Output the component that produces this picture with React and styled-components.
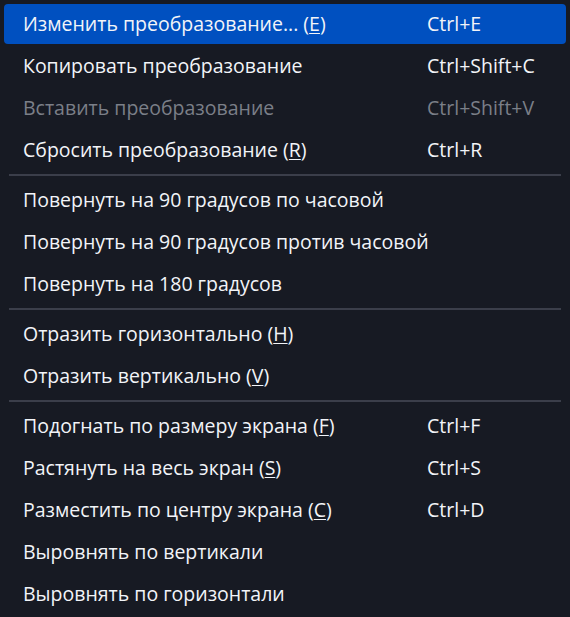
import React from "react";
import styled, { createGlobalStyle } from "styled-components";

const Global = createGlobalStyle`
  html, body { margin: 0; padding: 0; background: #171a23; }
  body { width: 570px; height: 617px; overflow: hidden; }
`;

const Menu = styled.div`
  box-sizing: border-box;
  width: 570px;
  height: 617px;
  padding: 4px 4px 3px;
  background: #171a23;
  display: flex;
  flex-direction: column;
  gap: 2px;
  font-family: "Open Sans", "Noto Sans", sans-serif;
  font-size: 19.5px;
`;

const Item = styled.div`
  box-sizing: border-box;
  height: 40px;
  display: grid;
  grid-template-columns: 404px 1fr;
  align-items: center;
  padding: 0 0 2px 19px;
  border-radius: 4px;
  background: ${(p) => (p.$active ? "#0050c0" : "transparent")};
  color: ${(p) => (p.$disabled ? "#7b7f88" : "#f2f4f8")};
  white-space: nowrap;
`;

const Label = styled.span``;
const Shortcut = styled.span``;

const Mnemonic = styled.span`
  text-decoration: underline;
  text-underline-offset: 2px;
  text-decoration-thickness: 1px;
`;

const Separator = styled.div`
  height: 2px;
  margin: 2px 5px;
  background: #3b3e4a;
`;

const groups = [
  [
    { label: ["Изменить преобразование... (", "E", ")"], sc: "Ctrl+E", active: true },
    { label: ["Копировать преобразование"], sc: "Ctrl+Shift+C" },
    { label: ["Вставить преобразование"], sc: "Ctrl+Shift+V", disabled: true },
    { label: ["Сбросить преобразование (", "R", ")"], sc: "Ctrl+R" },
  ],
  [
    { label: ["Повернуть на 90 градусов по часовой"] },
    { label: ["Повернуть на 90 градусов против часовой"] },
    { label: ["Повернуть на 180 градусов"] },
  ],
  [
    { label: ["Отразить горизонтально (", "H", ")"] },
    { label: ["Отразить вертикально (", "V", ")"] },
  ],
  [
    { label: ["Подогнать по размеру экрана (", "F", ")"], sc: "Ctrl+F" },
    { label: ["Растянуть на весь экран (", "S", ")"], sc: "Ctrl+S" },
    { label: ["Разместить по центру экрана (", "C", ")"], sc: "Ctrl+D" },
    { label: ["Выровнять по вертикали"] },
    { label: ["Выровнять по горизонтали"] },
  ],
];

export default function App() {
  return (
    <>
      <Global />
      <Menu>
        {groups.map((g, gi) => (
          <React.Fragment key={gi}>
            {gi > 0 && <Separator />}
            {g.map((it, i) => (
              <Item key={i} $active={it.active} $disabled={it.disabled}>
                <Label>
                  {it.label[0]}
                  {it.label[1] && <Mnemonic>{it.label[1]}</Mnemonic>}
                  {it.label[2]}
                </Label>
                <Shortcut>{it.sc || ""}</Shortcut>
              </Item>
            ))}
          </React.Fragment>
        ))}
      </Menu>
    </>
  );
}
